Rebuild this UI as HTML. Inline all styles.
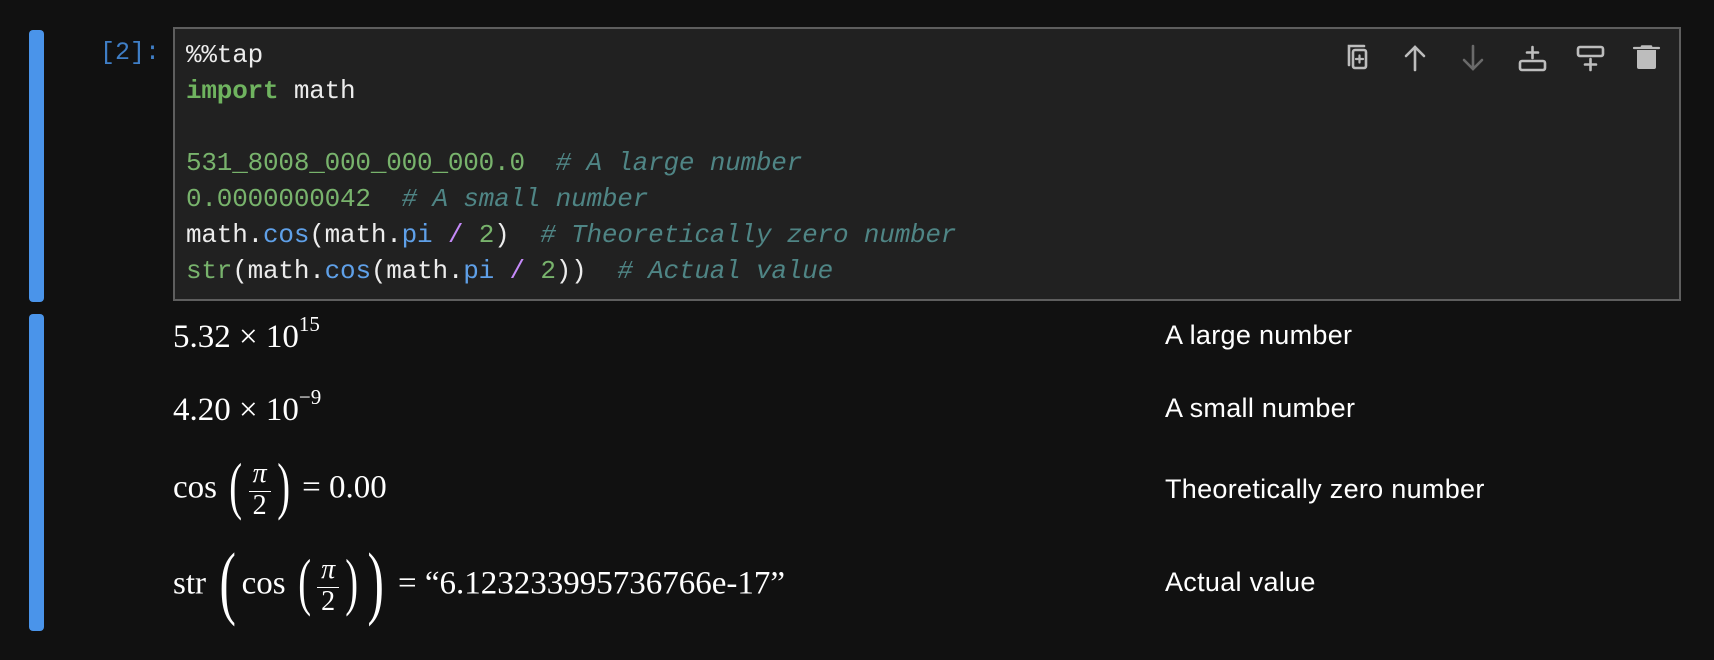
<!DOCTYPE html>
<html><head><meta charset="utf-8"><style>
body{margin:0;width:1714px;height:660px;background:#111111;position:relative;overflow:hidden;font-family:"Liberation Sans",sans-serif}
.bar{position:absolute;left:29px;width:15px;background:#4a94ea;border-radius:4px}
.box{position:absolute;left:173px;top:27px;width:1508px;height:274px;background:#212121;border:2px solid #5e5e5e;box-sizing:border-box}
.code{position:absolute;left:186px;top:37px;font-family:"Liberation Mono",monospace;font-size:26px;line-height:36px;color:#ececec;white-space:pre;margin:0;letter-spacing:-0.2px}
.g{color:#78b36c}.k{color:#6fb35f;font-weight:bold}.c{color:#4f8585;font-style:italic}.b{color:#5fa0e8}.p{color:#c58af9}
.prompt{position:absolute;left:100px;top:38px;font-family:"Liberation Mono",monospace;font-size:25px;color:#3f7ec6}
.m{position:absolute;left:173px;font-family:"Liberation Serif",serif;font-size:33px;color:#fff;white-space:nowrap;line-height:1}
.m sup{font-size:21px;position:relative;top:-4px;vertical-align:super}
.l{position:absolute;left:1165px;font-size:27px;color:#fff;white-space:nowrap;letter-spacing:0.3px}
.frac{display:inline-block;vertical-align:middle;text-align:center;font-size:28px;line-height:1;margin:0 2px}
.frac span{display:block;padding:0 4px}
.frac .n{border-bottom:1.5px solid #fff;padding-bottom:3px;font-style:italic}
.big{font-size:64px;vertical-align:middle;font-weight:200;display:inline-block;transform:scaleX(0.6);position:relative;top:-4px}
.bigger{font-size:82px}
</style></head><body>
<div class="bar" style="top:30px;height:272px"></div>
<div class="bar" style="top:314px;height:317px"></div>
<div class="prompt">[2]:</div>
<div class="box"></div>
<pre class="code">%%tap
<span class="k">import</span> math

<span class="g">531_8008_000_000_000.0</span>  <span class="c"># A large number</span>
<span class="g">0.0000000042</span>  <span class="c"># A small number</span>
math.<span class="b">cos</span>(math.<span class="b">pi</span> <span class="p">/</span> <span class="g">2</span>)  <span class="c"># Theoretically zero number</span>
<span class="g">str</span>(math.<span class="b">cos</span>(math.<span class="b">pi</span> <span class="p">/</span> <span class="g">2</span>))  <span class="c"># Actual value</span></pre>
<svg style="position:absolute;left:1340px;top:41px" width="330" height="36" viewBox="0 0 330 36" fill="none" stroke="#bdbdbd" stroke-width="2.6" stroke-linecap="round">
<path d="M9 24V5h15"/><rect x="13" y="9" width="13" height="18" rx="2"/><path d="M19.5 14.5v7M16 18h7" stroke-width="2.2"/>
<path d="M75 29V6M66 15l9-9 9 9"/>
<path d="M133 5v23M124 19l9 9 9-9" stroke="#6a6a6a"/>
<rect x="180" y="20" width="25" height="9" rx="2"/><path d="M192.5 6v11M187 11.5h11"/>
<rect x="238" y="6" width="25" height="9" rx="2"/><path d="M250.5 18v11M245 23.5h11"/>
<path d="M294 7h25" stroke-width="2.2"/><path d="M297 9h19v17a2 2 0 0 1-2 2h-15a2 2 0 0 1-2-2z" fill="#bdbdbd" stroke="none"/><path d="M302 5.5h9"/>
</svg>
<div class="m" style="top:318px">5.32 × 10<sup>15</sup></div>
<div class="m" style="top:391px">4.20 × 10<sup>−9</sup></div>
<div class="m" style="top:458px">cos <span class="big">(</span><span class="frac"><span class="n">π</span><span>2</span></span><span class="big">)</span> = 0.00</div>
<div class="m" style="top:545px">str <span class="big bigger">(</span>cos <span class="big">(</span><span class="frac"><span class="n">π</span><span>2</span></span><span class="big">)</span><span class="big bigger">)</span> = “6.123233995736766e-17”</div>
<div class="l" style="top:320px">A large number</div>
<div class="l" style="top:393px">A small number</div>
<div class="l" style="top:474px">Theoretically zero number</div>
<div class="l" style="top:567px">Actual value</div>
</body></html>
